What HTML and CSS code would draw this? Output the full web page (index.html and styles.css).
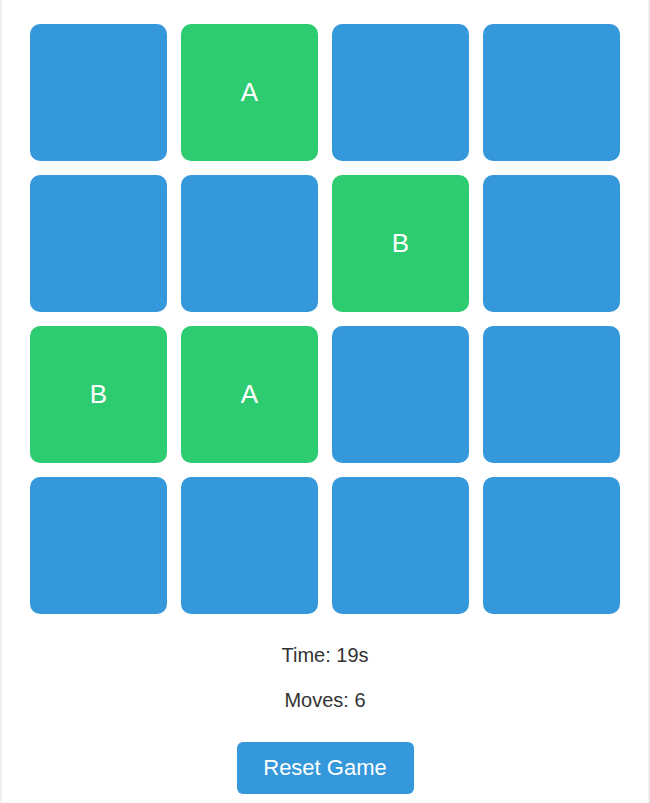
FILE: index.html
```html
<!DOCTYPE html>
<html lang="en">
<head>
<meta charset="utf-8">
<title>Memory Game</title>
<link rel="stylesheet" href="styles.css">
</head>
<body>
<div class="game">
  <div class="board">
    <div class="tile"></div>
    <div class="tile open">A</div>
    <div class="tile"></div>
    <div class="tile"></div>
    <div class="tile"></div>
    <div class="tile"></div>
    <div class="tile open">B</div>
    <div class="tile"></div>
    <div class="tile open">B</div>
    <div class="tile open">A</div>
    <div class="tile"></div>
    <div class="tile"></div>
    <div class="tile"></div>
    <div class="tile"></div>
    <div class="tile"></div>
    <div class="tile"></div>
  </div>
  <div class="stats">
    <div class="stat">Time: 19s</div>
    <div class="stat">Moves: 6</div>
  </div>
  <div class="actions">
    <button class="reset">Reset Game</button>
  </div>
</div>
</body>
</html>
```
FILE: styles.css
```css
html, body {
  margin: 0;
  padding: 0;
}
body {
  background: #efefef;
  font-family: "Liberation Sans", Arial, sans-serif;
  color: #333;
}
.game {
  background: #fff;
  margin: 0 2px;
  padding: 24px 28px 40px;
  min-height: 803px;
  box-sizing: border-box;
}
.board {
  display: grid;
  grid-template-columns: repeat(4, 1fr);
  gap: 14px;
}
.tile {
  aspect-ratio: 1 / 1;
  background: #3498db;
  border-radius: 10px;
  display: flex;
  align-items: center;
  justify-content: center;
  color: #fff;
  font-size: 26px;
}
.tile.open {
  background: #2ecc71;
}
.stats {
  display: flex;
  flex-direction: column;
  align-items: center;
  gap: 22px;
  margin-top: 30px;
}
.stat {
  font-size: 20px;
  line-height: 23px;
}
.actions {
  display: flex;
  justify-content: center;
  margin-top: 30px;
}
.reset {
  font-family: "Liberation Sans", Arial, sans-serif;
  background: #3498db;
  color: #fff;
  border: none;
  border-radius: 6px;
  font-size: 22px;
  line-height: 26px;
  padding: 13px 26px;
  width: 177px;
}
```
